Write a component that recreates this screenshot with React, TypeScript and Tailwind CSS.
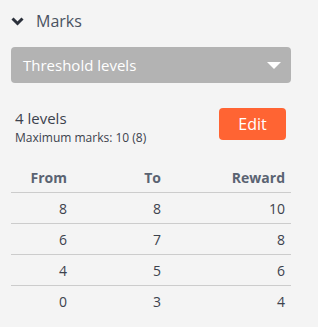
import React from "react";

const rows = [
  [8, 8, 10],
  [6, 7, 8],
  [4, 5, 6],
  [0, 3, 4],
];

export default function App() {
  return (
    <div
      className="w-[318px] h-[327px] bg-[#f4f4f4] text-[#3c424d] overflow-hidden"
      style={{ fontFamily: '"Open Sans", sans-serif' }}
    >
      <div className="ml-[11px] w-[280px]">
        <div className="flex items-center h-6 mt-[9px]">
          <svg width="13" height="9" viewBox="0 0 13 9">
            <path d="M1.5 1.5 L6.5 6.5 L11.5 1.5" fill="none" stroke="#2b303b" strokeWidth="3" />
          </svg>
          <span className="ml-[12px] text-[16px] text-[#4a5261]">Marks</span>
        </div>

        <div className="mt-[14px] h-9 rounded-[4px] bg-[#b3b3b3] flex items-center justify-between pl-3 pr-[10px]">
          <span className="text-[15px] text-white">Threshold levels</span>
          <svg width="14" height="7" viewBox="0 0 14 7">
            <polygon points="0,0 14,0 7,7" fill="#ffffff" />
          </svg>
        </div>

        <div className="mt-[25px] flex items-start justify-between pr-[5px]">
          <div className="pl-1">
            <div className="text-[15px] leading-[21px] text-[#3c424d]">4 levels</div>
            <div className="text-[12px] leading-[18px] text-[#3c424d]">Maximum marks: 10 (8)</div>
          </div>
          <button className="w-[67px] h-8 rounded-[4px] bg-[#ff6433] text-white text-[16px]">Edit</button>
        </div>

        <div className="mt-[16px] text-[14px]">
          <div className="grid grid-cols-[62px_94px_124px] h-[30px] items-center border-b border-[#cccccc] font-bold text-[#5a6372]">
            <div className="text-right pr-[6px]">From</div>
            <div className="text-right pr-[6px]">To</div>
            <div className="text-right pr-[6px]">Reward</div>
          </div>
          {rows.map((r, i) => (
            <div
              key={i}
              className={`grid grid-cols-[62px_94px_124px] h-[31px] items-center ${i < rows.length - 1 ? "border-b border-[#cccccc]" : ""}`}
            >
              <div className="text-right pr-[6px]">{r[0]}</div>
              <div className="text-right pr-[6px]">{r[1]}</div>
              <div className="text-right pr-[6px]">{r[2]}</div>
            </div>
          ))}
        </div>
      </div>
    </div>
  );
}
